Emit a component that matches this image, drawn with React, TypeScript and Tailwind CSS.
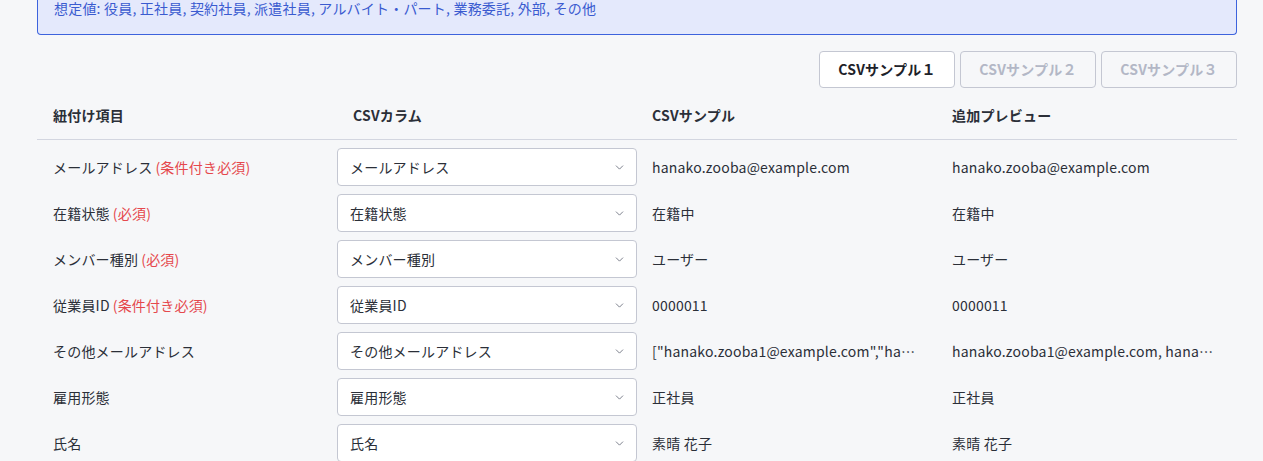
import { ChevronDown } from "lucide-react";

type Row = {
  label: string;
  req?: string;
  column: string;
  sample: string;
  preview: string;
};

const rows: Row[] = [
  {
    label: "メールアドレス",
    req: "(条件付き必須)",
    column: "メールアドレス",
    sample: "hanako.zooba@example.com",
    preview: "hanako.zooba@example.com",
  },
  { label: "在籍状態", req: "(必須)", column: "在籍状態", sample: "在籍中", preview: "在籍中" },
  { label: "メンバー種別", req: "(必須)", column: "メンバー種別", sample: "ユーザー", preview: "ユーザー" },
  { label: "従業員ID", req: "(条件付き必須)", column: "従業員ID", sample: "0000011", preview: "0000011" },
  {
    label: "その他メールアドレス",
    column: "その他メールアドレス",
    sample: '["hanako.zooba1@example.com","hanako.zooba2@example.com"]',
    preview: "hanako.zooba1@example.com, hanako.zooba2@example.com",
  },
  { label: "雇用形態", column: "雇用形態", sample: "正社員", preview: "正社員" },
  { label: "氏名", column: "氏名", sample: "素晴 花子", preview: "素晴 花子" },
];

const samples = ["CSVサンプル１", "CSVサンプル２", "CSVサンプル３"];

export default function App() {
  return (
    <div
      className="h-screen overflow-hidden bg-[#f6f7f9] pl-[37px] pr-[26px] text-[14px] tracking-[0.2px] text-[#2b2f38]"
      style={{ fontFamily: '"Noto Sans CJK JP", "Noto Sans", sans-serif' }}
    >
      <div className="-mt-[14px] rounded-b-[4px] border border-t-0 border-[#3d63dd] bg-[#e4e9fc] px-4 pb-[16px] pt-3 leading-5 text-[#3a5bd0]">
        想定値: 役員, 正社員, 契約社員, 派遣社員, アルバイト・パート, 業務委託, 外部, その他
      </div>

      <div className="mt-[16px] flex justify-end gap-[5px]">
        {samples.map((s, i) => (
          <button
            key={s}
            className={
              i === 0
                ? "h-[37px] w-[136px] rounded-[4px] border border-[#c4c7d2] bg-white font-bold text-[#1d2129]"
                : "h-[37px] w-[136px] rounded-[4px] border border-[#c4c7d2] bg-transparent font-bold text-[#b3b7c6]"
            }
          >
            {s}
          </button>
        ))}
      </div>

      <div className="mt-[3px] grid grid-cols-4 border-b border-[#d3d6e0] font-bold">
        <div className="py-[14px] pl-4 leading-5">紐付け項目</div>
        <div className="py-[14px] pl-4 leading-5">CSVカラム</div>
        <div className="py-[14px] pl-[15px] leading-5">CSVサンプル</div>
        <div className="py-[14px] pl-[15px] leading-5">追加プレビュー</div>
      </div>

      <div className="pt-[4px]">
        {rows.map((r) => (
          <div key={r.label} className="grid h-[46px] grid-cols-4 items-center">
            <div className="truncate pl-4">
              {r.label}
              {r.req && <span className="ml-[3px] text-[#e5484d]">{r.req}</span>}
            </div>
            <div className="flex h-[38px] items-center justify-between rounded-[4px] border border-[#c4c7d2] bg-white pl-[12px] pr-[10px]">
              <span className="truncate">{r.column}</span>
              <ChevronDown size={13} strokeWidth={1.5} className="shrink-0 text-[#5f6473]" />
            </div>
            <div className="truncate pl-[15px] pr-[17px]">{r.sample}</div>
            <div className="truncate pl-[15px] pr-[24px]">{r.preview}</div>
          </div>
        ))}
      </div>
    </div>
  );
}
